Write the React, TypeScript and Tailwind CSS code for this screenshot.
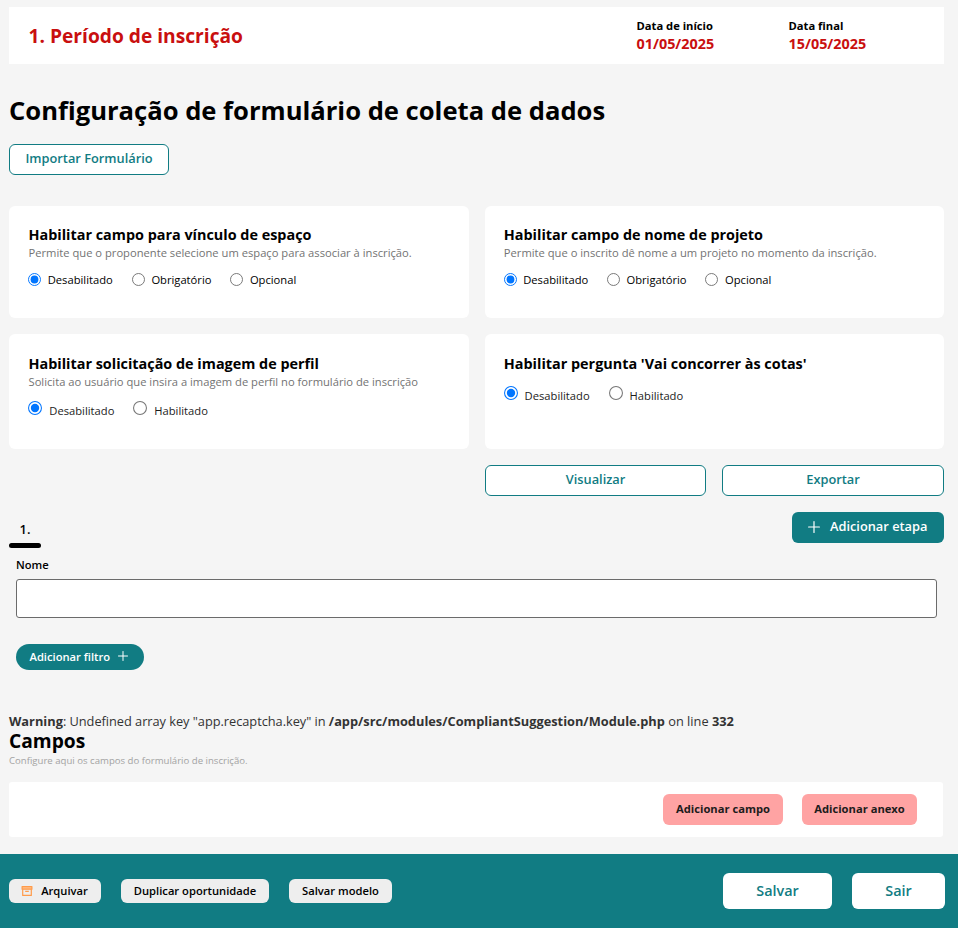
import React from "react";

type RadioProps = { checked?: boolean; size?: "sm" | "lg" };

function Radio({ checked, size = "sm" }: RadioProps) {
  const box = size === "sm" ? "size-[13px]" : "size-[14px]";
  return (
    <svg viewBox="0 0 14 14" className={`${box} shrink-0`}>
      <circle cx="7" cy="7" r="6.45" fill="#fff" stroke={checked ? "#0075ff" : "#767676"} strokeWidth="1.05" />
      {checked && <circle cx="7" cy="7" r="4.2" fill="#0075ff" />}
    </svg>
  );
}

function Plus({ className }: { className: string }) {
  return (
    <svg viewBox="0 0 12 12" className={className} fill="none" stroke="currentColor" strokeWidth="1.2" strokeLinecap="round">
      <path d="M6 .6v10.8M.6 6h10.8" />
    </svg>
  );
}

function SmallOption({ label, checked, className }: { label: string; checked?: boolean; className: string }) {
  return (
    <label className={`flex h-4 items-center gap-[6.7px] ${className}`}>
      <Radio checked={checked} />
      <span className="pt-[2px] leading-4 text-black">{label}</span>
    </label>
  );
}

function LargeOption({ label, checked, className }: { label: string; checked?: boolean; className: string }) {
  return (
    <label className={`flex h-[18px] items-start gap-[7px] ${className}`}>
      <Radio checked={checked} size="lg" />
      <span className="mt-[2px] leading-4">{label}</span>
    </label>
  );
}

function Card({ title, text, className, children }: { title: string; text?: string; className: string; children: React.ReactNode }) {
  return (
    <section className={`rounded-md bg-white ${className}`}>
      <h3 className="text-[14.4px] leading-5 font-bold text-black">{title}</h3>
      {text && <p className="-mt-px h-[18px] text-[11.2px] leading-[18px] text-[#737373]">{text}</p>}
      {children}
    </section>
  );
}

const outline =
  "flex h-[31px] items-center justify-center rounded-md border border-[#117c83] bg-white pb-px text-[12.8px] font-semibold text-[#117c83]";
const light = "flex h-6 items-center justify-center rounded-md bg-[#eeeeee] text-[11.2px] font-semibold text-black";
const pink = "flex h-[31px] items-center justify-center rounded-md bg-[#ffa3a3] pb-px text-[11.2px] font-bold text-[#1c1c1c]";
const white = "flex h-9 items-center justify-center rounded-md bg-white text-[14.4px] font-semibold text-[#117c83]";

export default function App() {
  return (
    <div className="flex h-[928px] w-[958px] flex-col overflow-hidden bg-[#f5f5f5] pt-[7px] font-['Open_Sans','Noto_Sans',sans-serif] whitespace-nowrap text-[#1c1c1c]">
      <header className="ml-[9px] flex h-[57px] w-[935px] shrink-0 items-center bg-white pl-[19.5px] font-bold">
        <h2 className="w-[608px] pt-px text-[19.2px] text-[#c90f0f]">1. Período de inscrição</h2>
        <div className="w-[152px] pb-[2px]">
          <p className="text-[11.2px] leading-[18px] text-black">Data de início</p>
          <p className="text-[14.4px] leading-[18px] text-[#c90f0f]">01/05/2025</p>
        </div>
        <div className="pb-[2px]">
          <p className="text-[11.2px] leading-[18px] text-black">Data final</p>
          <p className="text-[14.4px] leading-[18px] text-[#c90f0f]">15/05/2025</p>
        </div>
      </header>

      <main className="flex h-[790px] shrink-0 flex-col pl-[9px]">
        <h1 className="mt-[31px] h-8 text-[25.6px] leading-8 font-bold text-black">Configuração de formulário de coleta de dados</h1>
        <button className={`${outline} mt-[17px] w-40`}>Importar Formulário</button>

        <div className="mt-[31px] grid w-[935px] grid-cols-[460px_459px] gap-4">
          <Card className="h-28 pt-[19px] pl-[19.5px]" title="Habilitar campo para vínculo de espaço" text="Permite que o proponente selecione um espaço para associar à inscrição.">
            <div className="mt-[9px] flex text-[11.2px]">
              <SmallOption className="-ml-[0.5px] w-[103.7px]" label="Desabilitado" checked />
              <SmallOption className="w-[98.5px]" label="Obrigatório" />
              <SmallOption className="" label="Opcional" />
            </div>
          </Card>
          <Card className="h-28 pt-[19px] pl-[18.8px]" title="Habilitar campo de nome de projeto" text="Permite que o inscrito dê nome a um projeto no momento da inscrição.">
            <div className="mt-[9px] flex text-[11.2px]">
              <SmallOption className="-ml-[0.3px] w-[103.3px]" label="Desabilitado" checked />
              <SmallOption className="w-[98.5px]" label="Obrigatório" />
              <SmallOption className="" label="Opcional" />
            </div>
          </Card>
          <Card className="h-[115px] pt-5 pl-[19.5px]" title="Habilitar solicitação de imagem de perfil" text="Solicita ao usuário que insira a imagem de perfil no formulário de inscrição">
            <div className="mt-[10px] flex text-[11.2px]">
              <LargeOption className="-ml-[0.2px] w-[105px]" label="Desabilitado" checked />
              <LargeOption className="" label="Habilitado" />
            </div>
          </Card>
          <Card className="h-[115px] pt-5 pl-[18.8px]" title="Habilitar pergunta 'Vai concorrer às cotas'">
            <div className="mt-3 flex text-[11.2px]">
              <LargeOption className="-ml-[0.2px] w-[105px]" label="Desabilitado" checked />
              <LargeOption className="" label="Habilitado" />
            </div>
          </Card>
        </div>

        <div className="mt-4 ml-[476px] flex gap-4">
          <button className={`${outline} w-[221px]`}>Visualizar</button>
          <button className={`${outline} w-[222px]`}>Exportar</button>
        </div>

        <div className="mt-4 flex h-9 w-[935px] justify-between">
          <div className="flex w-8 flex-col pt-2 text-center">
            <span className="h-[23px] text-[12.8px] leading-[18px] font-semibold text-black">1.</span>
            <span className="h-[5px] rounded-full bg-black" />
          </div>
          <button className="flex h-[31px] w-[152px] items-center rounded-md bg-[#117c83] pb-px pl-4 text-[12.8px] font-semibold text-white">
            <Plus className="mr-[10px] mb-px size-3" />
            Adicionar etapa
          </button>
        </div>

        <div className="ml-[7px] flex flex-col">
          <label className="mt-2 h-[18px] text-[11.2px] leading-[18px] font-semibold text-black">Nome</label>
          <input className="mt-[5px] h-[39px] w-[921px] rounded-[3px] border border-[#6b6b6b] bg-white" />
          <button className="mt-[26px] flex h-[26px] w-32 items-center rounded-full bg-[#117c83] pl-[13.5px] text-[11.2px] font-semibold text-white">
            Adicionar filtro
            <Plus className="mb-[2px] ml-2 size-[10px]" />
          </button>
        </div>

        <p className="mt-[42px] h-[18px] text-[12.8px] leading-[18px] text-[#333333]">
          <b>Warning</b>
          <span className="tracking-[-0.035px]">: Undefined array key "app.recaptcha.key" in </span>
          <b>/app/src/modules/CompliantSuggestion/Module.php</b> on line <b>332</b>
        </p>
        <h2 className="h-[22px] text-[19.2px] leading-[22px] font-bold text-black">Campos</h2>
        <p className="mt-[2px] h-4 text-[9.6px] leading-[14px] text-[#a3a3a3]">Configure aqui os campos do formulário de inscrição.</p>
        <div className="mt-[12px] flex h-[55px] w-[934px] items-center justify-end gap-[19px] rounded-[3px] bg-white pr-[26px]">
          <button className={`${pink} w-[120px]`}>Adicionar campo</button>
          <button className={`${pink} w-[115px]`}>Adicionar anexo</button>
        </div>
      </main>

      <footer className="flex h-[74px] shrink-0 items-center gap-5 bg-[#117c83] pr-[13px] pl-[9px]">
        <button className={`${light} w-[92px] gap-2 pr-px`}>
          <svg viewBox="0 0 12 12" className="size-3" fill="none" stroke="#ff9b4a" strokeWidth="1.2" strokeLinejoin="round">
            <path d="M1.1 1.6h9.8v2.6H1.1z" fill="#ffc08c" />
            <path d="M1.7 4.3v6.1h8.6V4.3M4.2 6.3h3.6" />
          </svg>
          Arquivar
        </button>
        <button className={`${light} w-[148px]`}>Duplicar oportunidade</button>
        <button className={`${light} w-[103px]`}>Salvar modelo</button>
        <button className={`${white} ml-auto w-[109px]`}>Salvar</button>
        <button className={`${white} w-[93px]`}>Sair</button>
      </footer>
    </div>
  );
}
